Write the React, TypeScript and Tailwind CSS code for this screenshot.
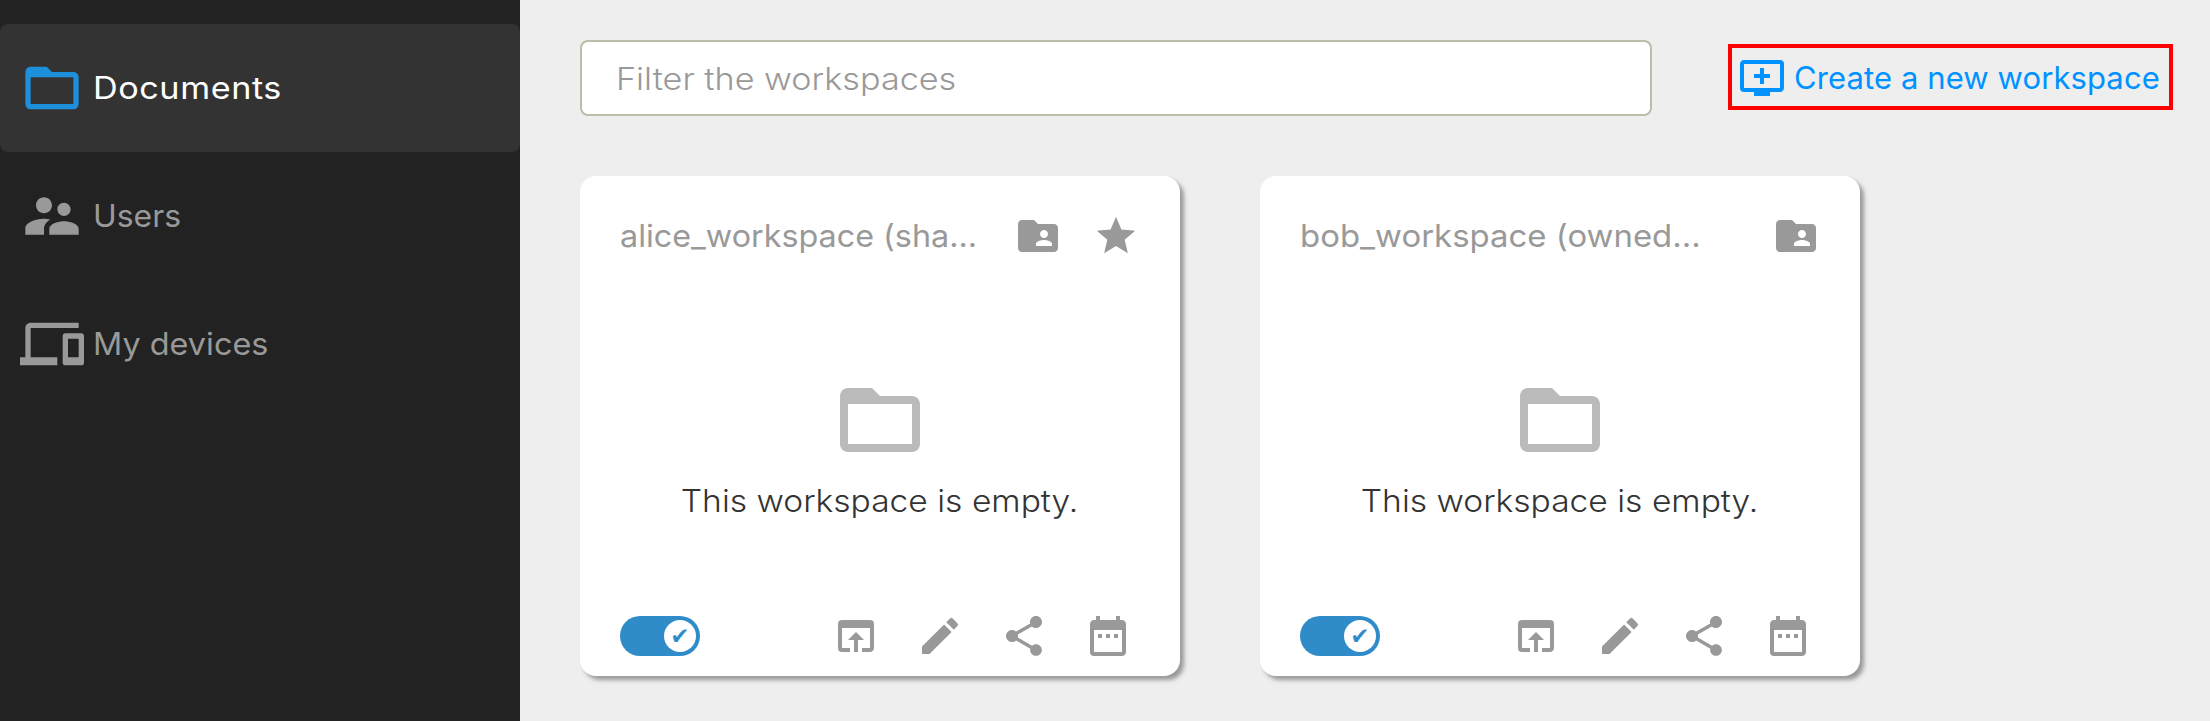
import type { ReactNode } from "react";
import {
  MdAddToQueue,
  MdDateRange,
  MdEdit,
  MdFolderOpen,
  MdFolderShared,
  MdOpenInBrowser,
  MdShare,
  MdStar,
  MdSupervisorAccount,
} from "react-icons/md";

function DevicesIcon() {
  return (
    <svg viewBox="0 0 24 24" fill="currentColor" className="size-16">
      <path d="M4 6h18V4H4c-1.1 0-2 .9-2 2v11H0v3h14v-3H4V6zm19 2h-6c-.55 0-1 .45-1 1v10c0 .55.45 1 1 1h6c.55 0 1-.45 1-1V9c0-.55-.45-1-1-1zm-1 9h-4v-7h4v7z" />
    </svg>
  );
}

function NavItem({ icon, children, active }: { icon: ReactNode; children: ReactNode; active?: boolean }) {
  return (
    <a
      className={
        active
          ? "flex h-32 items-center gap-[9px] rounded-lg bg-[#333333] pl-5 text-white"
          : "flex h-32 items-center gap-[9px] rounded-lg pl-5 text-[#999999]"
      }
    >
      {icon}
      {children}
    </a>
  );
}

function Toggle() {
  return (
    <div className="flex h-10 w-20 items-center justify-end rounded-full bg-[#308cc9] pr-1">
      <div className="flex size-8 items-center justify-center rounded-full bg-white font-['DejaVu_Sans',sans-serif] text-[23px] leading-none text-[#308cc9]">
        ✔
      </div>
    </div>
  );
}

function WorkspaceCard({ title, favorite }: { title: ReactNode; favorite?: boolean }) {
  return (
    <article className="flex h-[500px] w-[600px] flex-col rounded-2xl bg-white text-[#999999] shadow-[4px_4px_4px_0px_#999999]">
      <header className="flex h-[120px] items-center gap-[30px] pr-10 pl-10">
        <h2 className="flex-1 whitespace-nowrap">{title}</h2>
        <MdFolderShared className="size-12" />
        {favorite && (
          <span className="flex size-12 items-center justify-center">
            <MdStar className="size-[46px]" />
          </span>
        )}
      </header>
      <div className="flex flex-1 flex-col items-center pt-[76px]">
        <MdFolderOpen className="size-24 text-[#bbbbbb]" />
        <p className="mt-[13px] scale-x-[1.083] text-[31px] font-light text-[#333333]">This workspace is empty.</p>
      </div>
      <footer className="flex h-20 items-center justify-between pr-12 pl-10">
        <Toggle />
        <div className="flex gap-9">
          <MdOpenInBrowser className="size-12" />
          <MdEdit className="size-12" />
          <MdShare className="size-12" />
          <MdDateRange className="size-12" />
        </div>
      </footer>
    </article>
  );
}

export default function App() {
  return (
    <div className="flex h-[721px] w-[2210px] overflow-hidden bg-[#eeeeee] font-['Inter',sans-serif] text-[31px] leading-10">
      <nav className="w-[520px] shrink-0 bg-[#222222] pt-6">
        <NavItem active icon={<MdFolderOpen className="size-16 text-[#1d8fdb]" />}>
          <span className="origin-left scale-x-[1.103] tracking-[0.5px]">Documents</span>
        </NavItem>
        <NavItem icon={<MdSupervisorAccount className="size-16" />}>
          <span className="origin-left scale-x-[1.03]">Users</span>
        </NavItem>
        <NavItem icon={<DevicesIcon />}>
          <span className="origin-left scale-x-[1.045]">My devices</span>
        </NavItem>
      </nav>
      <main className="flex-1 pt-10 pl-[60px]">
        <div className="flex h-19 items-center">
          <div
            role="searchbox"
            className="flex h-19 w-[1072px] items-center rounded-lg border-2 border-[#bcbca9] bg-white px-[34px] pt-0.5 font-light text-[#999999]"
          >
            <span className="origin-left scale-x-[1.103]">Filter the workspaces</span>
          </div>
          <a className="mt-[-3px] ml-[76px] flex h-[66px] w-[445px] items-center gap-2 border-4 border-[#ff0000] pl-1.5 whitespace-nowrap text-[#0092ff]">
            <MdAddToQueue className="mt-[3px] size-12" />
            <span className="mt-[3px] tracking-[0.1px]">Create a new workspace</span>
          </a>
        </div>
        <section className="mt-[60px] flex gap-20">
          <WorkspaceCard
            favorite
            title={<span className="inline-block origin-left scale-x-[1.042]">alice_workspace (sha...</span>}
          />
          <WorkspaceCard title={<span className="inline-block origin-left scale-x-[1.062]">bob_workspace (owned...</span>} />
        </section>
      </main>
    </div>
  );
}
